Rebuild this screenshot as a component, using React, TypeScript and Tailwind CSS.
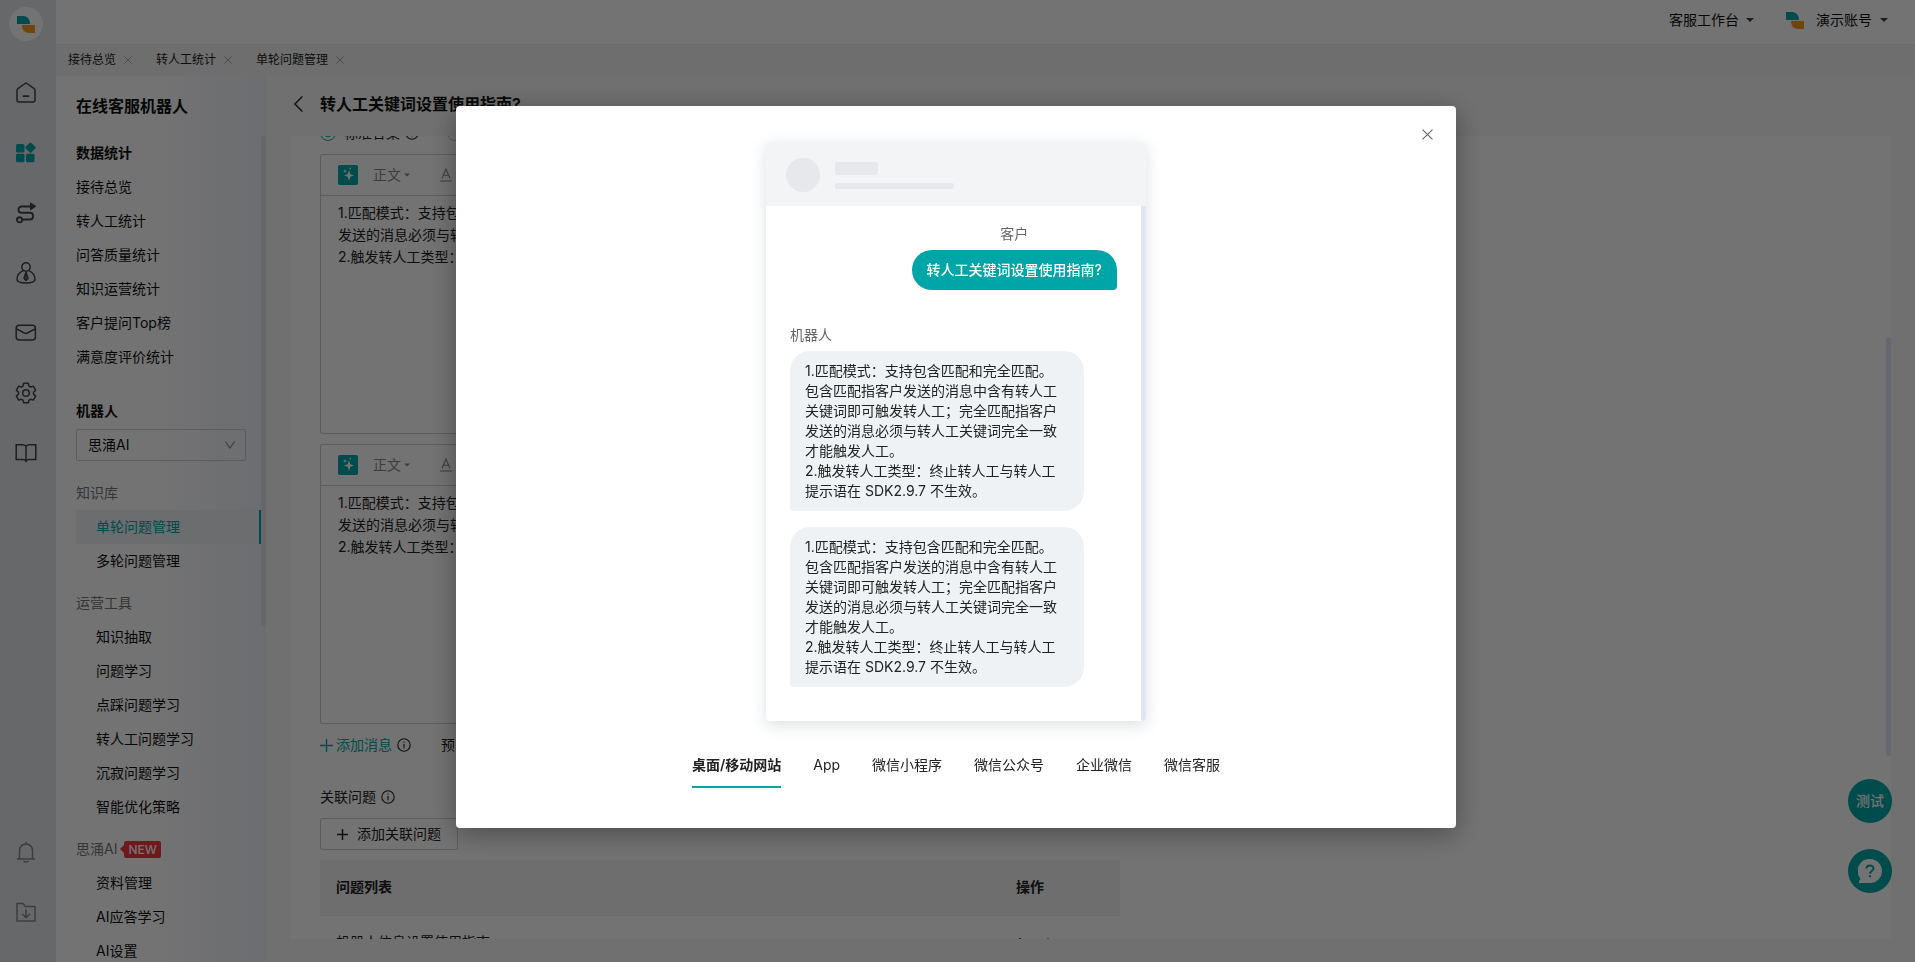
import type { ReactNode } from "react";
import clsx from "clsx";

const ANSWER = [
  "1.匹配模式：支持包含匹配和完全匹配。包含匹配指客户发送的消息中含有转人工关键词即可触发转人工；完全匹配指客户发送的消息必须与转人工关键词完全一致才能触发人工。",
  "2.触发转人工类型：终止转人工与转人工提示语在 SDK2.9.7 不生效。",
].join("\n");

const openTabs = ["接待总览", "转人工统计", "单轮问题管理"];

const statsItems = [
  "接待总览",
  "转人工统计",
  "问答质量统计",
  "知识运营统计",
  "客户提问Top榜",
  "满意度评价统计",
];

const menuGroups = [
  { title: "知识库", items: ["单轮问题管理", "多轮问题管理"] },
  {
    title: "运营工具",
    items: ["知识抽取", "问题学习", "点踩问题学习", "转人工问题学习", "沉寂问题学习", "智能优化策略"],
  },
  { title: "思涌AI", isNew: true, items: ["资料管理", "AI应答学习", "AI设置"] },
];

const channels = ["桌面/移动网站", "App", "微信小程序", "微信公众号", "企业微信", "微信客服"];

function Logo() {
  return (
    <svg width="18" height="17" viewBox="0 0 18 17">
      <path d="M0 0h6c4 0 7 3 7 8H0z" fill="#00a6a7" />
      <path d="M5 9h13v8h-6c-4 0-7-3-7-8z" fill="#f79a1e" />
    </svg>
  );
}

function Caret({ className }: { className?: string }) {
  return (
    <svg width="8" height="4" viewBox="0 0 8 4" className={className}>
      <path d="M0 0h8L4 4z" fill="currentColor" />
    </svg>
  );
}

function Cross({ size }: { size: number }) {
  return (
    <svg width={size} height={size} viewBox="0 0 10 10" fill="none" stroke="currentColor">
      <path d="M.5.5l9 9M9.5.5l-9 9" />
    </svg>
  );
}

function Plus({ size, strokeWidth = 1.3 }: { size: number; strokeWidth?: number }) {
  return (
    <svg width={size} height={size} viewBox="0 0 12 12" fill="none" stroke="currentColor" strokeWidth={strokeWidth}>
      <path d="M6 0v12M0 6h12" />
    </svg>
  );
}

function Info() {
  return (
    <svg width="14" height="14" viewBox="0 0 14 14" fill="none" stroke="#222" strokeWidth="1.1">
      <circle cx="7" cy="7" r="6.2" />
      <path d="M7 6v4.4M7 3.6v1.2" />
    </svg>
  );
}

function RailIcon({ children }: { children: ReactNode }) {
  return (
    <svg
      width="22"
      height="22"
      viewBox="0 0 22 22"
      fill="none"
      stroke="currentColor"
      strokeWidth="1.5"
      strokeLinecap="round"
      strokeLinejoin="round"
    >
      {children}
    </svg>
  );
}

const railItems: { label: string; icon: ReactNode; active?: boolean }[] = [
  {
    label: "首页",
    icon: (
      <>
        <path d="M2 8.5c0-1 .4-1.6 1.2-2.2L9.300 2c1-.8 2.400-.8 3.400 0l6.100 4.300c.8.6 1.200 1.200 1.200 2.200V18c0 1.100-.9 2-2 2H4c-1.100 0-2-.9-2-2z" />
        <path d="M8.500 14.200h5" strokeWidth="1.800" />
      </>
    ),
  },
  {
    label: "机器人",
    active: true,
    icon: (
      <g fill="currentColor" stroke="none">
        <rect x="1" y="2" width="8.500" height="8.500" rx="1.500" />
        <rect x="1" y="11.800" width="8.500" height="8.500" rx="1.500" />
        <rect x="11" y="11.800" width="8.500" height="8.500" rx="1.500" />
        <rect x="11.500" y="1.700" width="8" height="8" rx="1.200" transform="rotate(45 15.500 5.700)" />
      </g>
    ),
  },
  {
    label: "流程",
    icon: (
      <g strokeWidth="1.900">
        <path d="M15 4.500H6.500a3 3 0 0 0-3 3v.2a3 3 0 0 0 3 3H15a3 3 0 0 1 3 3v.8a3 3 0 0 1-3 3H8" />
        <circle cx="4.500" cy="17.800" r="2.600" />
        <path d="M15.500 1.200v6.600l5-3.300z" fill="currentColor" strokeWidth="1" />
      </g>
    ),
  },
  {
    label: "客户",
    icon: (
      <>
        <circle cx="11" cy="5" r="4.200" />
        <path d="M8.200 8.600C4.500 10.300 2 13.800 2 17.300 2 19.800 5.500 21 11 21s9-1.200 9-3.700c0-3.500-2.500-7-6.200-8.700" />
        <path d="M11 10.300l-2 6 2 2.200 2-2.200z" />
        <path d="M11 12v5" />
      </>
    ),
  },
  {
    label: "消息",
    icon: (
      <>
        <rect x="1.200" y="3.200" width="19.200" height="14.800" rx="3" />
        <path d="M1.500 6.800l7.800 4.200c1 .5 2 .5 3 0l7.800-4.200" />
      </>
    ),
  },
  {
    label: "设置",
    icon: (
      <g transform="translate(0 -0.7)">
        <path d="M8.700 2h4.600l.7 2.800 1.500.9 2.800-.8 2.300 4-2.100 2v1.900l2.100 2-2.300 4-2.800-.8-1.500.9-.7 2.500H8.700L8 18.900 6.500 18l-2.800.8-2.300-4 2.100-2v-1.900l-2.100-2 2.300-4 2.800.8L8 4.800z" />
        <circle cx="11" cy="11.700" r="3.300" />
      </g>
    ),
  },
  {
    label: "文档",
    icon: (
      <path
        d="M11 4.200C10 3 9 2.800 7.500 2.800H1.200v14.700H8c1.200 0 2.200.4 3 1.500.8-1.100 1.800-1.500 3-1.500h6.800V2.800h-6.300C13 2.800 12 3 11 4.200zM11 4.200v15.500"
        strokeLinejoin="miter"
      />
    ),
  },
];

const railFooter = [
  {
    label: "通知",
    icon: <path d="M2.500 18h17M4.500 18V9.500a6.500 6.500 0 0 1 13 0V18M9 20.200c1 1 3 1 4 0M11 1.200v1.500" />,
  },
  {
    label: "下载",
    icon: (
      <>
        <path d="M2 2.500h6l2.500 3H20V20H2z" />
        <path d="M11 9v7.500M7.500 13.200L11 16.600l3.500-3.400" />
      </>
    ),
  },
];

function Rail() {
  return (
    <nav className="flex w-14 shrink-0 flex-col items-center bg-[#e4e7eb] pr-1 pb-5 text-[#444]">
      <div className="mt-[7px] mb-[22px] flex size-[34px] shrink-0 items-center justify-center rounded-full bg-white">
        <Logo />
      </div>
      {railItems.map((item) => (
        <button
          key={item.label}
          aria-label={item.label}
          className={clsx("flex h-[60px] items-center", item.active && "text-[#00a6a7]")}
        >
          <RailIcon>{item.icon}</RailIcon>
        </button>
      ))}
      <div className="mt-auto text-[#888]">
        {railFooter.map((item) => (
          <button key={item.label} aria-label={item.label} className="flex h-[60px] items-center">
            <RailIcon>{item.icon}</RailIcon>
          </button>
        ))}
      </div>
    </nav>
  );
}

function Sidebar() {
  return (
    <aside className="flex w-[210px] shrink-0 flex-col bg-linear-to-r from-white from-45% to-[#f0f2fa]">
      <h1 className="flex h-[60px] shrink-0 items-center pl-5 text-base font-semibold">在线客服机器人</h1>
      <div className="relative min-h-0 flex-1 overflow-hidden pr-[5px] pl-5">
        <h2 className="h-[34px] text-sm leading-[34px] font-semibold">数据统计</h2>
        {statsItems.map((item) => (
          <a key={item} href="#" className="block h-[34px] text-sm leading-[34px]">
            {item}
          </a>
        ))}
        <label htmlFor="robot" className="mt-5 block h-[34px] text-sm leading-[34px] font-semibold">
          机器人
        </label>
        <div className="relative mt-px mr-[15px] mb-[15px]">
          <select id="robot" className="block h-8 w-full appearance-none rounded-xs border border-[#ccc] px-[11px] text-sm">
            <option>思涌AI</option>
          </select>
          <svg
            width="10"
            height="8"
            viewBox="0 0 10 8"
            fill="none"
            stroke="#888"
            strokeWidth="1.2"
            className="pointer-events-none absolute top-3 right-[11px]"
          >
            <path d="M.5.5L5 7 9.500.5" />
          </svg>
        </div>
        {menuGroups.map((group) => (
          <div key={group.title} className="mb-2">
            <div className="flex h-[34px] items-center text-sm text-[#777]">
              {group.title}
              {group.isNew && (
                <span className="ml-[3px] flex items-center">
                  <svg width="4" height="8" viewBox="0 0 4 8">
                    <path d="M4 0v8L0 4z" fill="#f5383f" />
                  </svg>
                  <span className="h-[17px] rounded-xs bg-[#f5383f] px-1 text-xs leading-[17px] font-medium text-white">
                    NEW
                  </span>
                </span>
              )}
            </div>
            {group.items.map((item) => (
              <a
                key={item}
                href="#"
                className={clsx(
                  "block h-[34px] pl-5 text-sm leading-[34px]",
                  item === "单轮问题管理" && "border-r-2 border-[#00a6a7] bg-[#eff1f5] text-[#00a6a7]"
                )}
              >
                {item}
              </a>
            ))}
          </div>
        ))}
        {/* Scroll thumb */}
        <div className="absolute top-0 right-0 h-[490px] w-[5px] rounded-full bg-[#e0e5ee]" />
      </div>
    </aside>
  );
}

function Editor({ label }: { label: string }) {
  return (
    <div className="mb-[10px] flex h-[280px] w-[800px] max-w-full flex-col rounded-xs border border-[#ccc]">
      <div className="flex h-[41px] shrink-0 items-center border-b border-[#ccc] pl-[17px] text-sm text-[#888]">
        <button aria-label="AI 改写" className="size-5 rounded-xs bg-[#00a6a7]">
          <svg width="20" height="20" viewBox="0 0 20 20" fill="#fff">
            <path d="M11 5l1.300 4.200L16 10.500l-3.700 1.300L11 16l-1.300-4.200L6 10.500l3.700-1.300zM7 3.800l.6 1.600 1.600.6-1.600.6L7 8.200l-.6-1.600L4.800 6l1.600-.6zM11.500 2.800h1.400v1.400h-1.400z" />
          </svg>
        </button>
        <button className="ml-[15px] flex items-center gap-[3px]">
          正文
          <Caret className="w-[6px]" />
        </button>
        <button className="ml-[30px] leading-none" aria-label="文字颜色">
          <svg width="12" height="14" viewBox="0 0 12 14" fill="none" stroke="currentColor" strokeWidth="1.1">
            <path d="M2 10.500L6 1l4 9.500M3.500 7.200h5M0 13h12" />
          </svg>
        </button>
      </div>
      <textarea
        aria-label={label}
        defaultValue={ANSWER}
        className="min-h-0 flex-1 resize-none overflow-hidden px-[17px] pt-[6px] text-sm leading-[22px] outline-none"
      />
    </div>
  );
}

function Content() {
  return (
    <main className="flex min-w-0 flex-1 flex-col bg-[#f8f8f8] pr-6 pb-[23px] pl-6">
      <div className="flex h-[60px] shrink-0 items-center gap-[17px] pb-1 pl-1">
        <button aria-label="返回">
          <svg width="9" height="16" viewBox="0 0 9 16" fill="none" stroke="#222" strokeWidth="1.4">
            <path d="M8.300.5L1 8l7.300 7.500" />
          </svg>
        </button>
        <h2 className="text-base font-semibold">转人工关键词设置使用指南?</h2>
      </div>
      <section className="relative min-h-0 flex-1 overflow-hidden bg-white pl-[30px] text-[#222]">
        <div className="-mt-[19px] mb-[5px] flex h-8 items-center text-sm">
          <input
            id="standard"
            type="radio"
            name="answer"
            defaultChecked
            className="size-4 appearance-none rounded-full border border-[#00a6a7] bg-[#00a6a7] bg-clip-content p-[3px]"
          />
          <label htmlFor="standard" className="mr-[5px] ml-2">
            标准答案
          </label>
          <Info />
          <input
            id="flow"
            type="radio"
            name="answer"
            aria-label="流程答案"
            className="ml-7 size-4 appearance-none rounded-full border border-[#bbb]"
          />
        </div>
        <Editor label="标准答案 1" />
        <Editor label="标准答案 2" />
        <div className="flex h-[22px] items-center text-sm">
          <button className="mr-[5px] flex items-center gap-[3px] text-[#00a6a7]">
            <Plus size={13} />
            添加消息
          </button>
          <Info />
          <button className="ml-[30px]">预览</button>
        </div>
        <div className="mt-[29px] mb-[9px] flex h-6 items-center gap-[5px] text-sm">
          关联问题
          <Info />
        </div>
        <button className="mb-[10px] flex h-8 items-center gap-[9px] rounded-xs border border-[#ccc] px-4 text-sm">
          <Plus size={11} strokeWidth={1.6} />
          添加关联问题
        </button>
        <table className="w-[800px] max-w-full table-fixed text-left text-sm">
          <thead>
            <tr className="h-[55px] border-b border-[#e8e8e8] bg-[#f3f3f3]">
              <th className="w-[680px] px-4 font-semibold">问题列表</th>
              <th className="px-4 font-semibold">操作</th>
            </tr>
          </thead>
          <tbody>
            <tr className="h-[53px]">
              <td className="px-4">机器人信息设置使用指南</td>
              <td className="px-4">
                <span className="flex gap-5 text-[#555]">
                  <button aria-label="上移">
                    <svg width="8" height="8" viewBox="0 0 8 8" fill="none" stroke="currentColor">
                      <path d="M4 0v8M1 3l3-3 3 3" />
                    </svg>
                  </button>
                  <button aria-label="下移">
                    <svg width="8" height="8" viewBox="0 0 8 8" fill="none" stroke="currentColor">
                      <path d="M4 0v8M1 5l3 3 3-3" />
                    </svg>
                  </button>
                </span>
              </td>
            </tr>
          </tbody>
        </table>
        <div className="absolute top-[201px] right-0 h-[419px] w-[5px] rounded-full bg-[#dfe6f3]" />
      </section>
    </main>
  );
}

function FloatingButtons() {
  return (
    <div className="absolute right-[23px] bottom-[69px] flex flex-col gap-[26px] text-white">
      <button className="size-11 rounded-full bg-[#00a6a7] text-sm font-medium">测试</button>
      <button aria-label="帮助" className="flex size-11 items-center justify-center rounded-full bg-[#00a6a7]">
        <svg width="24" height="24" viewBox="0 0 24 24">
          <path d="M12 0a12 12 0 1 1 0 24H1v-2.300l1.600-1.800A12 12 0 0 1 12 0z" fill="#fff" />
          <path
            d="M8.500 9.500C8.500 5.500 15.500 5.500 15.500 9.400c0 2.600-3.500 2.600-3.500 5.400M12 16.200v2"
            fill="none"
            stroke="#00a6a7"
            strokeWidth="2"
          />
        </svg>
      </button>
    </div>
  );
}

function ChatPreview() {
  return (
    <div className="w-[380px] overflow-hidden rounded bg-white shadow-[0_4px_16px_rgba(40,60,90,0.16)]">
      <div className="flex h-16 items-center bg-[#f3f4f6] pt-0.5 pl-5">
        <div className="size-[34px] rounded-full bg-[#e7e8ec]" />
        <div className="ml-[15px] flex flex-col gap-2">
          <div className="h-[13px] w-[43px] rounded-xs bg-[#e7e8ec]" />
          <div className="h-[6px] w-[119px] rounded-xs bg-[#e7e8ec]" />
        </div>
      </div>
      <div className="flex">
        <div className="flex flex-1 flex-col pt-4 pr-6 pb-[34px] pl-6 text-sm">
          <div className="flex flex-col items-center gap-1 self-end">
            <span className="h-6 leading-6 text-[#666]">客户</span>
            <p className="rounded-[20px] rounded-br bg-[#00a6a7] px-[15px] leading-10 font-medium text-white">
              转人工关键词设置使用指南?
            </p>
          </div>
          <span className="mt-[33px] h-6 leading-6 text-[#666]">机器人</span>
          <div className="mt-1 flex flex-col gap-4">
            {[1, 2].map((n) => (
              <p
                key={n}
                className="w-[294px] rounded-[20px] rounded-bl bg-[#eff2f5] py-[10px] pr-5 pl-[15px] leading-5 whitespace-pre-wrap"
              >
                {ANSWER}
              </p>
            ))}
          </div>
        </div>
        <div className="w-[5px] rounded-b bg-[#dfe6f3]" />
      </div>
    </div>
  );
}

function PreviewDialog() {
  return (
    <div className="fixed inset-0 flex items-start justify-center bg-black/55 pt-[106px] pr-[3px]">
      <div
        role="dialog"
        aria-label="预览"
        className="relative flex w-[1000px] flex-col items-center rounded bg-white pt-9 pb-10 text-[#222] shadow-[0_6px_28px_rgba(0,0,0,0.35)]"
      >
        <button aria-label="关闭" className="absolute top-[23px] right-[23px] text-[#666]">
          <Cross size={11} />
        </button>
        <ChatPreview />
        <div role="tablist" className="mt-7 flex gap-8 text-sm">
          {channels.map((name, i) => (
            <button
              key={name}
              role="tab"
              aria-selected={i === 0}
              className={clsx(
                "h-[39px] border-b-2 pb-[5px]",
                i === 0 ? "border-[#00a6a7] font-semibold" : "border-transparent"
              )}
            >
              {name}
            </button>
          ))}
        </div>
      </div>
    </div>
  );
}

export default function App() {
  return (
    <div className="relative flex h-screen overflow-hidden bg-white font-[Inter,'Noto_Sans_CJK_SC',sans-serif] text-[#111]">
      <Rail />
      <div className="flex min-w-0 flex-1 flex-col">
        <header className="flex h-11 shrink-0 items-center justify-end pr-[27px] pb-1 text-sm">
          <button className="mr-8 flex items-center gap-[7px]">
            客服工作台
            <Caret className="text-[#444]" />
          </button>
          <Logo />
          <button className="ml-3 flex items-center gap-2">
            演示账号
            <Caret className="text-[#444]" />
          </button>
        </header>
        <div className="flex h-8 shrink-0 items-center gap-6 border-t border-[#ececec] bg-[#f4f4f4] pb-0.5 pl-3 text-xs text-[#222]">
          {openTabs.map((tab) => (
            <div key={tab} className="flex items-center gap-2">
              <a href="#">{tab}</a>
              <button aria-label={`关闭${tab}`} className="text-[#999]">
                <Cross size={8} />
              </button>
            </div>
          ))}
        </div>
        <div className="flex min-h-0 flex-1">
          <Sidebar />
          <Content />
        </div>
      </div>
      <FloatingButtons />
      <PreviewDialog />
    </div>
  );
}
